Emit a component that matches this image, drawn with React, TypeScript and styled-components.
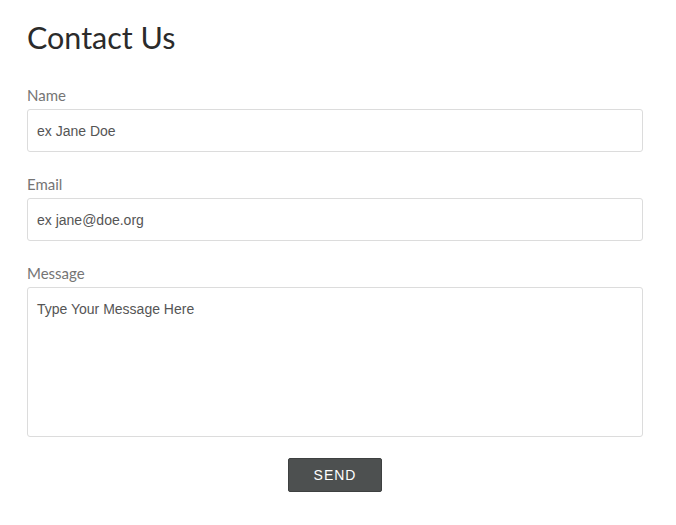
import React from "react";
import styled, { createGlobalStyle } from "styled-components";

const Global = createGlobalStyle`
  html, body { margin: 0; padding: 0; background: #fff; }
  * { box-sizing: border-box; }
`;

const Page = styled.div`
  padding: 19px 33px 20px 27px;
  display: flex;
  flex-direction: column;
`;

const Title = styled.h1`
  margin: 0 0 30px;
  font-family: Lato, "Noto Sans", sans-serif;
  font-weight: 400;
  font-size: 30.5px;
  line-height: 36px;
  color: #2b2b2b;
`;

const Field = styled.div`
  display: flex;
  flex-direction: column;
  margin-bottom: 22px;
`;

const Label = styled.label`
  font-family: Lato, "Noto Sans", sans-serif;
  font-size: 15px;
  line-height: 20px;
  color: #757575;
  margin-bottom: 4px;
`;

const Input = styled.input`
  height: 43px;
  width: 100%;
  border: 1px solid #dcdcdc;
  border-radius: 3px;
  padding: 0 9px;
  font-family: "Liberation Sans", Arial, sans-serif;
  font-size: 14px;
  color: #555;
  outline: none;
  &::placeholder { color: #555; opacity: 1; }
`;

const TextArea = styled.textarea<{ $h: number }>`
  height: ${(p) => p.$h}px;
  width: 100%;
  border: 1px solid #dcdcdc;
  border-radius: 3px;
  padding: 13px 9px;
  font-family: "Liberation Sans", Arial, sans-serif;
  font-size: 14px;
  line-height: 16px;
  color: #555;
  resize: none;
  outline: none;
  &::placeholder { color: #555; opacity: 1; }
`;

const Actions = styled.div`
  display: flex;
  justify-content: center;
  margin-top: -1px;
`;

const Button = styled.button`
  width: 94px;
  height: 34px;
  background: #4d5050;
  border: 1px solid #3e4141;
  border-radius: 2px;
  color: #fff;
  font-family: "Liberation Sans", Arial, sans-serif;
  font-size: 14px;
  letter-spacing: 1px;
  cursor: pointer;
`;

export default function App() {
  return (
    <>
      <Global />
      <Page>
        <Title>Contact Us</Title>
        <Field>
          <Label>Name</Label>
          <Input placeholder="ex Jane Doe" />
        </Field>
        <Field>
          <Label>Email</Label>
          <Input placeholder="ex jane@doe.org" />
        </Field>
        <Field>
          <Label>Message</Label>
          <TextArea $h={150} placeholder="Type Your Message Here" />
        </Field>
        <Actions>
          <Button>SEND</Button>
        </Actions>
      </Page>
    </>
  );
}
